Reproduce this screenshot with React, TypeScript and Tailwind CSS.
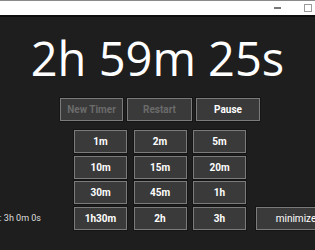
import React from "react";

const btn =
  "h-[23px] shrink-0 flex items-center justify-center bg-[#3a3a3a] border border-[#7b7b7b] shadow-[0_0_0_1px_#151515] text-[10px]";

const rows = [
  ["1m", "2m", "5m"],
  ["10m", "15m", "20m"],
  ["30m", "45m", "1h"],
];

export default function App() {
  return (
    <div className="w-[315px] h-[250px] overflow-hidden bg-[#1e1e1e] flex flex-col font-['Roboto',sans-serif]">
      {/* window chrome */}
      <div className="h-[17px] shrink-0 bg-white border-t border-[#8a8a8a] border-b-2 border-b-[#0e0e0e] flex items-center justify-end">
        <div className="w-[7px] h-[2px] bg-[#777] mr-[23px]" />
        <div className="w-[8px] h-[8px] border border-[#9a9a9a] mr-[3px]" />
      </div>

      <div className="h-[80px] shrink-0 flex items-center justify-center pt-[3px]">
        <span className="text-[47px] leading-none text-white font-['Open_Sans',sans-serif]">2h 59m 25s</span>
      </div>

      <div className="flex gap-[4px] pl-[60px] pt-[1px]">
        <div className={btn + " w-[63px] font-bold text-[#6b6b6b]"}>New Timer</div>
        <div className={btn + " w-[65px] font-bold text-[#6b6b6b]"}>Restart</div>
        <div className={btn + " w-[64px] font-bold text-white"}>Pause</div>
      </div>

      <div className="flex flex-col gap-[2.7px] mt-[9px]">
        {rows.map((r, i) => (
          <div key={i} className="flex gap-[6.5px] pl-[74px]">
            {r.map((t) => (
              <div key={t} className={btn + " w-[53px] font-bold text-white"}>{t}</div>
            ))}
          </div>
        ))}
        <div className="flex items-center">
          <div className="w-[74px] shrink-0 pr-[33px] overflow-hidden flex justify-end">
            <span className="whitespace-nowrap text-[9px] text-[#dcdcdc]">Total: 3h 0m 0s</span>
          </div>
          <div className="flex gap-[6.5px] shrink-0">
            {["1h30m", "2h", "3h"].map((t) => (
              <div key={t} className={btn + " w-[53px] font-bold text-white"}>{t}</div>
            ))}
          </div>
          <div className={btn + " w-[80px] ml-[10px] text-[8.5px] text-white"}>minimize</div>
        </div>
      </div>
    </div>
  );
}
